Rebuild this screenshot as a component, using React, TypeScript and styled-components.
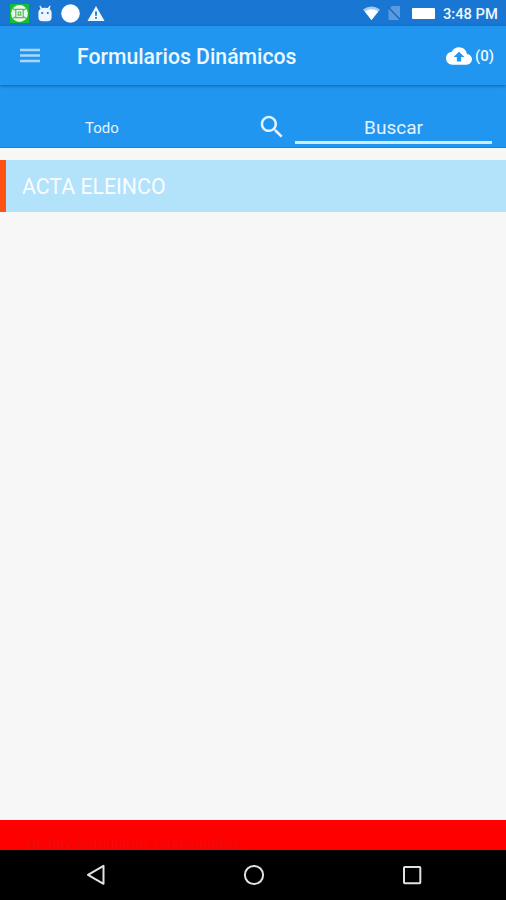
import React from 'react'
import styled, { createGlobalStyle } from 'styled-components'

interface FormItem {
  id: number
  name: string
}

const forms: FormItem[] = [{ id: 1, name: 'ACTA ELEINCO' }]

export default function App() {
  return (
    <>
      <GlobalStyle />
      <Screen>
        <StatusBar />
        <AppBar>
          <MenuButton aria-label="Menú">
            <svg width="20" height="15" viewBox="0 0 20 15" fill="#a9d6fa">
              <path d="M0 .8h20v2.4H0zM0 6.3h20v2.4H0zM0 11.8h20v2.4H0z" />
            </svg>
          </MenuButton>
          <Title>Formularios Dinámicos</Title>
          <SyncButton>
            <svg width="26" height="26" viewBox="0 0 24 24" fill="#fff">
              <path d="M19.35 10.04C18.67 6.59 15.64 4 12 4 9.11 4 6.6 5.64 5.35 8.04 2.34 8.36 0 10.91 0 14c0 3.31 2.69 6 6 6h13c2.76 0 5-2.24 5-5 0-2.64-2.05-4.78-4.65-4.96zM14 13v4h-4v-4H7l5-5 5 5h-3z" />
            </svg>
            <span>(0)</span>
          </SyncButton>
        </AppBar>
        <FilterBar>
          <FilterLabel>Todo</FilterLabel>
          <SearchIcon width="30" height="30" viewBox="0 0 24 24" fill="#e3f3ff">
            <path d="M15.5 14h-.79l-.28-.27C15.41 12.59 16 11.11 16 9.5 16 5.91 13.09 3 9.5 3S3 5.91 3 9.5 5.91 16 9.5 16c1.61 0 3.09-.59 4.23-1.57l.27.28v.79l5 4.99L20.49 19l-4.99-5zm-6 0C7.01 14 5 11.99 5 9.5S7.01 5 9.5 5 14 7.01 14 9.5 11.99 14 9.5 14z" />
          </SearchIcon>
          <SearchInput placeholder="Buscar" />
        </FilterBar>
        <FormList>
          {forms.map((form) => (
            <FormRow key={form.id}>{form.name}</FormRow>
          ))}
        </FormList>
        <Snackbar>No hay formularios relacionados.</Snackbar>
        <NavigationBar />
      </Screen>
    </>
  )
}

function StatusBar() {
  return (
    <StatusWrapper>
      <StatusGroup $gap={7}>
        <svg width="19" height="19" viewBox="0 0 19 19">
          <path d="M0 0h19v19H0z" fill="#18bd37" />
          <circle cx="9.5" cy="9.5" r="8.4" fill="#e9f8e8" />
          <g fill="none" stroke="#55bb63" strokeWidth="1.2">
            <path d="M5.8 5.3h7.4v8.4H5.8zM2.8 4.5l3 2M16.2 4.5l-3 2M2.8 14.5l3-2M16.2 14.5l-3-2M8.2 8h2.6v3.2H8.2z" />
          </g>
        </svg>
        <svg width="18" height="19" viewBox="0 0 18 19">
          <path
            d="M4.2 1.5l2 2.6Q9 3.2 11.8 4.1l2-2.6.8.6-1 3q2 1.2 2 3.4v4.8q0 4-4 4H6.4q-4 0-4-4V8.5q0-2.2 2-3.4l-1-3z"
            fill="#edf5ff"
          />
          <circle cx="6.2" cy="9" r="1.1" fill="#1976d2" />
          <circle cx="11.8" cy="9" r="1.1" fill="#1976d2" />
        </svg>
        <svg width="19" height="19" viewBox="0 0 19 19">
          <circle cx="9.5" cy="9.5" r="9.3" fill="#fff" />
        </svg>
        <svg width="18" height="19" viewBox="0 0 18 19">
          <path d="M9 2l8.5 15H.5z" fill="#eef6ff" />
          <path d="M8.1 7.5h1.8v4.2H8.1zM8.1 13h1.8v1.8H8.1z" fill="#1976d2" />
        </svg>
      </StatusGroup>
      <StatusGroup $gap={8}>
        <WifiIcon width="17" height="14" viewBox="0 0 17 14">
          <path d="M0 3.5Q8.5-2.5 17 3.5L8.5 14z" fill="#a6cbf0" />
          <path d="M1.8 5.5Q8.5 1 15.2 5.5L8.5 14z" fill="#fff" />
        </WifiIcon>
        <svg width="14" height="16" viewBox="0 0 14 16">
          <path d="M5 1h8v14H1.5V4.5z" fill="#5a9bdf" />
          <path d="M1 2l12.5 13" stroke="#1769bd" strokeWidth="1.5" />
        </svg>
        <Battery />
        <Clock>3:48 PM</Clock>
      </StatusGroup>
    </StatusWrapper>
  )
}

function NavigationBar() {
  return (
    <NavWrapper>
      <svg width="24" height="24" viewBox="0 0 24 24">
        <path d="M19.5 2.8v18L4 11.8z" />
      </svg>
      <svg width="24" height="24" viewBox="0 0 24 24">
        <circle cx="12" cy="12" r="9.1" />
      </svg>
      <svg width="24" height="24" viewBox="0 0 24 24">
        <rect x="4" y="4" width="16.3" height="16.3" rx="0.8" />
      </svg>
    </NavWrapper>
  )
}

const GlobalStyle = createGlobalStyle`
  * {
    box-sizing: border-box;
  }

  body {
    margin: 0;
    font-family: Roboto, 'Liberation Sans', sans-serif;
  }

  svg {
    display: block;
    flex-shrink: 0;
  }
`

const Screen = styled.div`
  display: flex;
  flex-direction: column;
  width: 100%;
  height: 100vh;
  overflow: hidden;
  background: #f7f7f7;
`

const StatusWrapper = styled.div`
  display: flex;
  flex: 0 0 26px;
  align-items: center;
  justify-content: space-between;
  padding: 0 8px 0 10px;
  background: #1976d2;
`

const StatusGroup = styled.div<{ $gap: number }>`
  display: flex;
  align-items: center;
  gap: ${({ $gap }) => $gap}px;
`

const WifiIcon = styled.svg`
  margin-right: -1px;
`

const Battery = styled.div`
  width: 23px;
  height: 11px;
  margin-left: 3px;
  border-radius: 1px;
  background: #fff;
`

const Clock = styled.span`
  width: 55px;
  padding-top: 2px;
  color: #f1f8ff;
  font-size: 14.7px;
  font-weight: 500;
  line-height: 20px;
  white-space: nowrap;
`

const AppBar = styled.header`
  z-index: 1;
  display: flex;
  flex: 0 0 59px;
  align-items: center;
  padding: 0 12px 0 20px;
  background: #2196f0;
  box-shadow: 0 1px 3px rgba(0, 40, 90, 0.5);
`

const MenuButton = styled.button`
  padding: 0;
  border: 0;
  background: none;
`

const Title = styled.h1`
  flex: 1;
  margin: 2px 0 0 37px;
  color: #eef8ff;
  font-size: 21.2px;
  font-weight: 500;
  line-height: 28px;
  white-space: nowrap;
`

const SyncButton = styled.div`
  display: flex;
  align-items: center;
  gap: 3px;
  color: #eef8ff;
  font-size: 15px;
  font-weight: 500;
`

const FilterBar = styled.div`
  display: flex;
  flex: 0 0 63px;
  align-items: flex-end;
  padding: 0 14px 3px 0;
  border-bottom: 1px solid #1583dc;
  background: #2196f0;
`

const FilterLabel = styled.div`
  width: 204px;
  padding-bottom: 7px;
  color: #e3f3ff;
  font-size: 15px;
  line-height: 18px;
  text-align: center;
`

const SearchIcon = styled.svg`
  margin: 0 8px 2px 53px;
`

const SearchInput = styled.input`
  flex: 1;
  min-width: 0;
  height: 33px;
  padding: 3px 0 0;
  border: 0;
  border-bottom: 3px solid #cdeaff;
  outline: 0;
  background: transparent;
  color: #e3f3ff;
  font: 400 19px Roboto, 'Liberation Sans', sans-serif;
  text-align: center;

  &::placeholder {
    color: #e3f3ff;
    opacity: 1;
  }
`

const FormList = styled.main`
  flex: 1;
  padding-top: 12px;
`

const FormRow = styled.div`
  height: 52px;
  padding-left: 16px;
  border-left: 6px solid #ff5316;
  background: #b3e2fb;
  color: #fafdff;
  font-size: 21.3px;
  line-height: 54px;
`

const Snackbar = styled.div`
  flex: 0 0 30px;
  padding: 18px 26px 0;
  background: #ff0000;
  color: #ec0c0c;
  font-size: 14.8px;
  line-height: 12px;
  white-space: nowrap;
`

const NavWrapper = styled.nav`
  display: flex;
  flex: 0 0 50px;
  align-items: center;
  justify-content: space-between;
  padding: 0 82px 0 84px;
  background: #000;

  svg {
    fill: none;
    stroke: #e2e2e2;
    stroke-width: 2;
    stroke-linejoin: round;
  }
`
